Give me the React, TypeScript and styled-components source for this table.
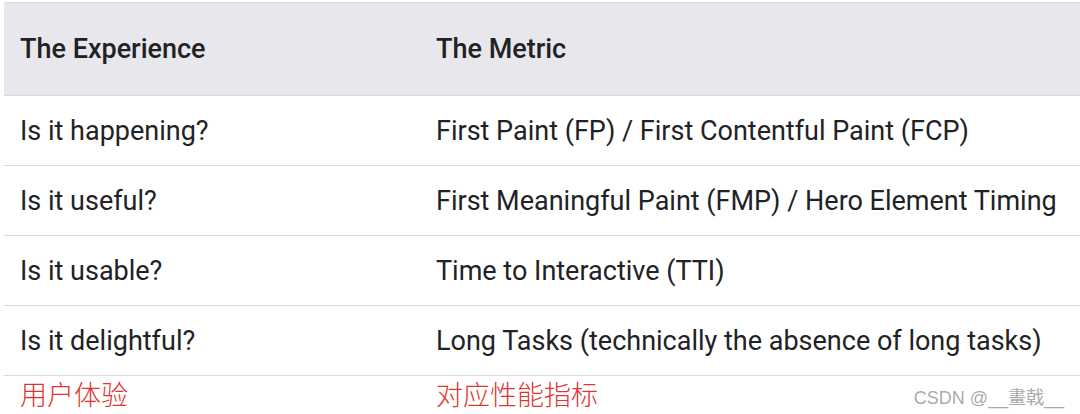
import React from "react";
import styled, { createGlobalStyle } from "styled-components";

const Global = createGlobalStyle`
  html, body { margin: 0; padding: 0; background: #ffffff; }
  body { font-family: Roboto, "Noto Sans", sans-serif; }
`;

const Page = styled.div`
  width: 1080px;
  height: 414px;
  padding: 2px 0 0 4px;
  box-sizing: border-box;
  overflow: hidden;
  background: #fff;
`;

const Table = styled.div`
  display: grid;
  grid-template-columns: 416px 1fr;
  border-top: 1px solid #dcdcdf;
`;

const Cell = styled.div<{ $head?: boolean }>`
  display: flex;
  align-items: center;
  height: ${(p) => (p.$head ? "92px" : "69px")};
  padding-left: 16px;
  border-bottom: 1px solid #dadadc;
  background: ${(p) => (p.$head ? "#e8e8ec" : "#fff")};
  font-size: 27px;
  font-weight: ${(p) => (p.$head ? 500 : 400)};
  color: #212226;
  white-space: nowrap;
`;

const Footer = styled.div`
  display: grid;
  grid-template-columns: 416px 1fr auto;
  align-items: center;
  height: 34px;
`;

const Label = styled.div`
  padding-left: 16px;
  font-family: "Noto Sans CJK SC", sans-serif;
  font-size: 27px;
  font-weight: 300;
  color: #e0352e;
  line-height: 1;
`;

const Mark = styled.div`
  font-family: "Liberation Sans", "Noto Sans CJK TC", sans-serif;
  font-size: 18px;
  color: #ababab;
  padding-right: 16px;
  padding-top: 6px;
`;

const rows: [string, string][] = [
  ["Is it happening?", "First Paint (FP) / First Contentful Paint (FCP)"],
  ["Is it useful?", "First Meaningful Paint (FMP) / Hero Element Timing"],
  ["Is it usable?", "Time to Interactive (TTI)"],
  ["Is it delightful?", "Long Tasks (technically the absence of long tasks)"],
];

export default function App() {
  return (
    <>
      <Global />
      <Page>
        <Table>
          <Cell $head>The Experience</Cell>
          <Cell $head>The Metric</Cell>
          {rows.map(([a, b]) => (
            <React.Fragment key={a}>
              <Cell>{a}</Cell>
              <Cell>{b}</Cell>
            </React.Fragment>
          ))}
        </Table>
        <Footer>
          <Label>用户体验</Label>
          <Label>对应性能指标</Label>
          <Mark>CSDN @__畫戟__</Mark>
        </Footer>
      </Page>
    </>
  );
}
